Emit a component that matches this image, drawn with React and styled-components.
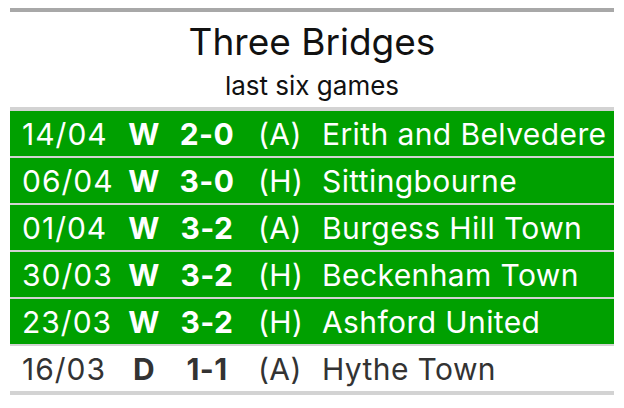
import styled, { createGlobalStyle } from "styled-components";

const GlobalStyle = createGlobalStyle`
  body {
    margin: 0;
    background: #ffffff;
    font-family: "Inter", "Liberation Sans", sans-serif;
  }
`;

const Wrapper = styled.div`
  padding: 8px 10px 0 10px;
`;

const Table = styled.div`
  width: 604px;
  border-top: 4px solid #a8a8a8;
  border-bottom: 4px solid #d3d3d3;
`;

const Heading = styled.div`
  display: flex;
  flex-direction: column;
  align-items: center;
  gap: 7px;
  padding: 8px 0 6px;
  border-bottom: 4px solid #d3d3d3;
  color: #111;
`;

const Title = styled.div`
  font-size: 37px;
  line-height: 44px;
`;

const Subtitle = styled.div`
  font-size: 26px;
  line-height: 30px;
`;

const Row = styled.div`
  display: grid;
  grid-template-columns: 96px 52px 74px 64px 1fr;
  box-sizing: border-box;
  height: 45px;
  padding: 3px 0 0 12px;
  line-height: 41px;
  background: ${(p) => (p.$win ? "#00a000" : "#ffffff")};
  color: ${(p) => (p.$win ? "#ffffff" : "#333333")};
  font-size: 30px;
  letter-spacing: 0.4px;
  & + & {
    border-top: 2px solid #d3d3d3;
    height: 47px;
  }
`;

const Cell = styled.div`
  text-align: ${(p) => (p.$center ? "center" : "left")};
  font-weight: ${(p) => (p.$bold ? 700 : 400)};
  padding-left: ${(p) => p.$pad || 0}px;
  white-space: nowrap;
`;

const DateText = styled.span`
  letter-spacing: 1px;
`;

const games = [
  { date: "14/04", res: "W", score: "2-0", venue: "(A)", team: "Erith and Belvedere" },
  { date: "06/04", res: "W", score: "3-0", venue: "(H)", team: "Sittingbourne" },
  { date: "01/04", res: "W", score: "3-2", venue: "(A)", team: "Burgess Hill Town" },
  { date: "30/03", res: "W", score: "3-2", venue: "(H)", team: "Beckenham Town" },
  { date: "23/03", res: "W", score: "3-2", venue: "(H)", team: "Ashford United" },
  { date: "16/03", res: "D", score: "1-1", venue: "(A)", team: "Hythe Town" },
];

export default function App() {
  return (
    <Wrapper>
      <GlobalStyle />
      <Table>
        <Heading>
          <Title>Three Bridges</Title>
          <Subtitle>last six games</Subtitle>
        </Heading>
        {games.map((g) => (
          <Row key={g.date} $win={g.res === "W"}>
            <Cell><DateText>{g.date}</DateText></Cell>
            <Cell $center $bold>{g.res}</Cell>
            <Cell $center $bold>{g.score}</Cell>
            <Cell $pad={14}>{g.venue}</Cell>
            <Cell $pad={14}>{g.team}</Cell>
          </Row>
        ))}
      </Table>
    </Wrapper>
  );
}
